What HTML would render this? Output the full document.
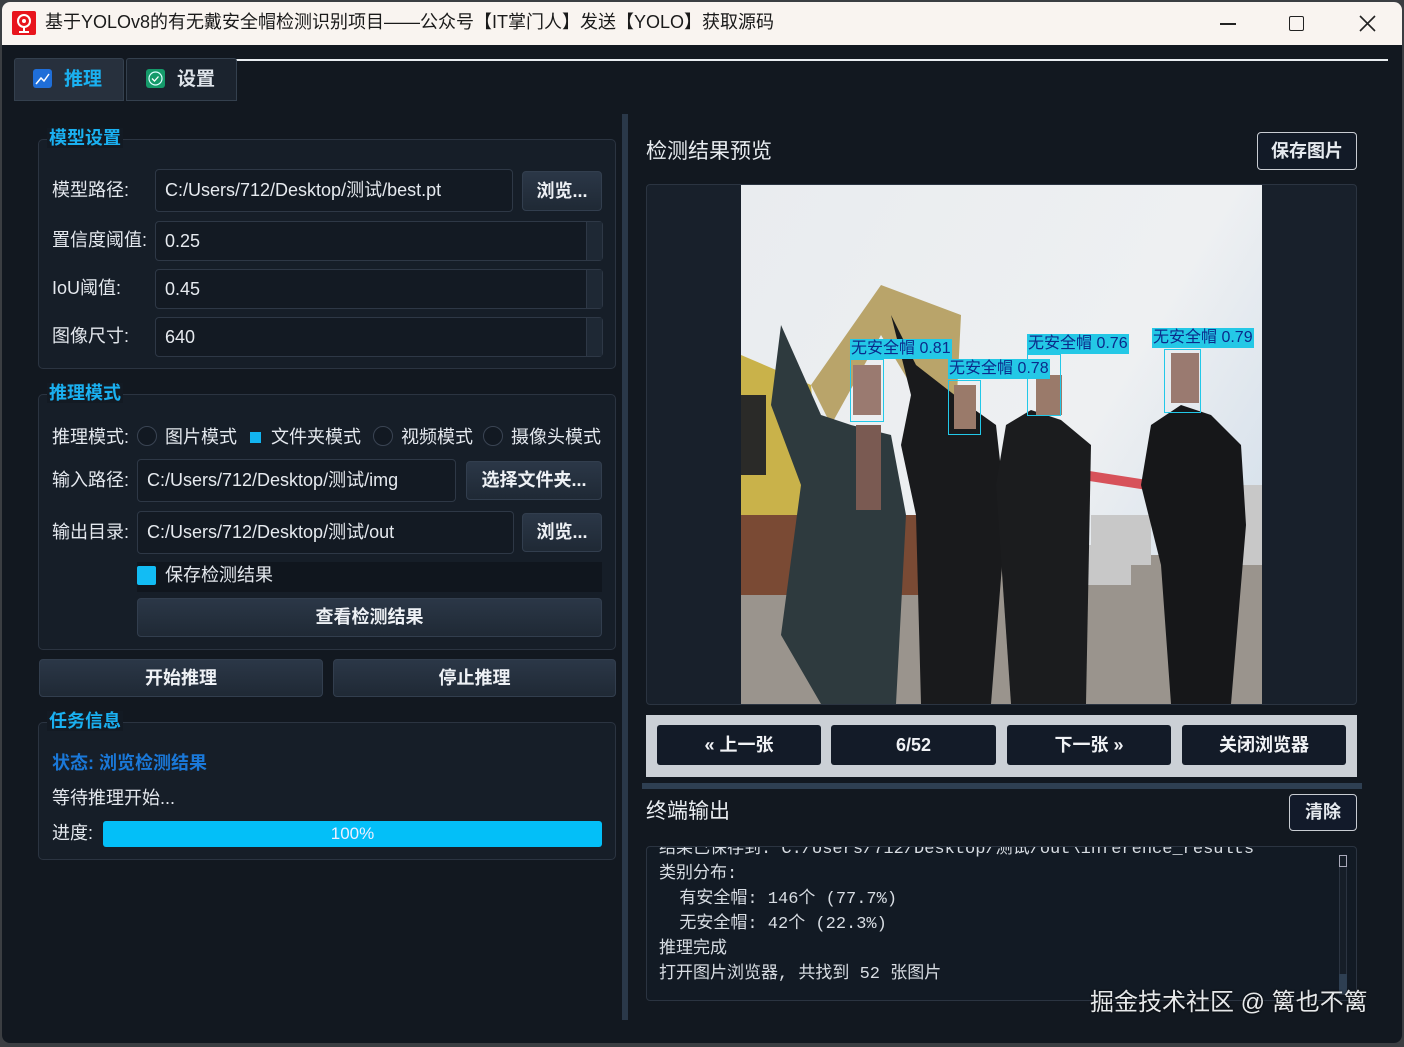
<!DOCTYPE html>
<html><head><meta charset="utf-8"><style>
*{box-sizing:border-box;margin:0;padding:0}
body{width:1404px;height:1047px;background:#3b3e42;position:relative;overflow:hidden;font-family:"Liberation Sans","Noto Sans CJK SC",sans-serif;color:#e6eaef;line-height:1.25}
.a{position:absolute}
#win{left:2px;top:2px;width:1400px;height:1041px;background:#121820;border-radius:8px;overflow:hidden}
#tb{left:0;top:0;width:1400px;height:43px;background:#f9f4f0;color:#1a1a1a;font-size:18px}
.lbl{font-size:18px;color:#e4e8ee;white-space:nowrap}
.grp{border:1px solid #2b3441;border-radius:5px;background:#161e28}
.gt{font-size:18px;font-weight:bold;color:#1ab0f0;background:#131a23;padding:0 2px;line-height:20px}
.inp{background:#131a23;border:1px solid #2e3846;border-radius:4px;font-size:18px;color:#e6eaef;padding-left:9px;display:flex;align-items:center}
.btn{background:linear-gradient(#2b3747,#1f2935);border:1px solid #323e4e;border-radius:4px;font-size:18px;font-weight:bold;color:#eef1f5;display:flex;align-items:center;justify-content:center}
.spin{background:#1e2834;border-left:1px solid #2e3846}
.nb{background:#131b28;border-radius:3px;font-size:18px;font-weight:bold;color:#f0f2f5;display:flex;align-items:center;justify-content:center;top:10px;height:40px}
.rad{width:20px;height:20px;border-radius:50%;border:1px solid #3a4453;background:#121922}
.mono{font-family:"Liberation Mono","Noto Sans CJK SC",monospace;font-size:17px;color:#d8dde3;white-space:pre;line-height:25px}
.det{border:1.5px solid #22c8e8}
.dl{background:#24c8e6;color:#0b2a8a;font-size:16px;line-height:20px;white-space:nowrap;padding:0 1px}
</style></head><body>
<div id="win" class="a">
<div id="tb" class="a">
 <div class="a" style="left:10px;top:9px;width:24px;height:24px;background:#e8141c;border-radius:2px"><svg width="24" height="24"><circle cx="12" cy="10" r="6" fill="none" stroke="#fff" stroke-width="2"/><circle cx="12" cy="10" r="2" fill="#fff"/><path d="M12 16v5M7 21h10" stroke="#fff" stroke-width="2"/></svg></div>
 <div class="a" style="left:43px;top:9px">基于YOLOv8的有无戴安全帽检测识别项目——公众号【IT掌门人】发送【YOLO】获取源码</div>
 <div class="a" style="left:1218px;top:21px;width:16px;height:1.5px;background:#222"></div>
 <div class="a" style="left:1287px;top:14px;width:15px;height:15px;border:1.5px solid #222;border-radius:2px"></div>
 <svg class="a" style="left:1357px;top:13px" width="17" height="17"><path d="M1 1L16 16M16 1L1 16" stroke="#222" stroke-width="1.6"/></svg>
</div>
<div class="a" style="left:190px;top:57px;width:1196px;height:1.5px;background:#e8ecf0"></div>
<div class="a" style="left:12px;top:56px;width:110px;height:43px;background:#27303d;border:1px solid #34404e;border-radius:3px 3px 0 0"></div>
<div class="a" style="left:31px;top:67px;width:19px;height:19px;background:#1f6ed8;border-radius:3px"><svg width="19" height="19"><path d="M3 15L8 9l3 3 5-7" stroke="#fff" stroke-width="1.5" fill="none"/></svg></div>
<div class="a" style="left:62px;top:66px;font-size:19px;font-weight:bold;color:#1ab0f0">推理</div>
<div class="a" style="left:124px;top:56px;width:111px;height:43px;background:#1b232e;border:1px solid #34404e;border-radius:3px 3px 0 0"></div>
<div class="a" style="left:144px;top:67px;width:19px;height:19px;background:#159a6a;border-radius:3px"><svg width="19" height="19"><circle cx="9.5" cy="9.5" r="6.5" fill="none" stroke="#dff" stroke-width="1.2"/><path d="M6 9.5l2.5 2.5 4-4.5" stroke="#fff" stroke-width="1.3" fill="none"/></svg></div>
<div class="a" style="left:175px;top:66px;font-size:19px;font-weight:bold;color:#dfe4ea">设置</div>
<div class="a" style="left:620px;top:112px;width:6px;height:906px;background:#2a3849"></div>

<div class="a grp" style="left:36px;top:137px;width:578px;height:230px"></div>
<div class="a gt" style="left:45px;top:126px">模型设置</div>
<div class="a lbl" style="left:50px;top:177px">模型路径:</div>
<div class="a inp" style="left:153px;top:167px;width:358px;height:43px">C:/Users/712/Desktop/测试/best.pt</div>
<div class="a btn" style="left:520px;top:169px;width:80px;height:40px">浏览...</div>
<div class="a lbl" style="left:50px;top:227px">置信度阈值:</div>
<div class="a inp" style="left:153px;top:219px;width:448px;height:40px">0.25</div>
<div class="a spin" style="left:584px;top:220px;width:16px;height:38px"></div>
<div class="a lbl" style="left:50px;top:275px">IoU阈值:</div>
<div class="a inp" style="left:153px;top:267px;width:448px;height:40px">0.45</div>
<div class="a spin" style="left:584px;top:268px;width:16px;height:38px"></div>
<div class="a lbl" style="left:50px;top:323px">图像尺寸:</div>
<div class="a inp" style="left:153px;top:315px;width:448px;height:40px">640</div>
<div class="a spin" style="left:584px;top:316px;width:16px;height:38px"></div>

<div class="a grp" style="left:36px;top:392px;width:578px;height:256px"></div>
<div class="a gt" style="left:45px;top:381px">推理模式</div>
<div class="a lbl" style="left:50px;top:424px">推理模式:</div>
<div class="a rad" style="left:135px;top:424px"></div><div class="a lbl" style="left:163px;top:424px">图片模式</div>
<div class="a" style="left:248px;top:430px;width:11px;height:11px;background:#12b4f0"></div><div class="a lbl" style="left:269px;top:424px">文件夹模式</div>
<div class="a rad" style="left:371px;top:424px"></div><div class="a lbl" style="left:399px;top:424px">视频模式</div>
<div class="a rad" style="left:481px;top:424px"></div><div class="a lbl" style="left:509px;top:424px">摄像头模式</div>
<div class="a lbl" style="left:50px;top:467px">输入路径:</div>
<div class="a inp" style="left:135px;top:457px;width:319px;height:43px">C:/Users/712/Desktop/测试/img</div>
<div class="a btn" style="left:464px;top:459px;width:136px;height:39px">选择文件夹...</div>
<div class="a lbl" style="left:50px;top:519px">输出目录:</div>
<div class="a inp" style="left:135px;top:509px;width:377px;height:43px">C:/Users/712/Desktop/测试/out</div>
<div class="a btn" style="left:520px;top:511px;width:80px;height:39px">浏览...</div>
<div class="a" style="left:135px;top:560px;width:465px;height:30px;background:#10161e"></div>
<div class="a" style="left:135px;top:564px;width:19px;height:19px;background:#12bcf4;border-radius:2px"></div>
<div class="a lbl" style="left:163px;top:562px">保存检测结果</div>
<div class="a btn" style="left:135px;top:596px;width:465px;height:39px">查看检测结果</div>

<div class="a btn" style="left:37px;top:657px;width:284px;height:38px">开始推理</div>
<div class="a btn" style="left:331px;top:657px;width:283px;height:38px">停止推理</div>

<div class="a grp" style="left:36px;top:720px;width:578px;height:138px"></div>
<div class="a gt" style="left:45px;top:709px">任务信息</div>
<div class="a" style="left:50px;top:750px;font-size:18px;font-weight:bold;color:#1a78d8">状态: 浏览检测结果</div>
<div class="a lbl" style="left:50px;top:785px">等待推理开始...</div>
<div class="a lbl" style="left:50px;top:820px">进度:</div>
<div class="a" style="left:101px;top:819px;width:499px;height:26px;background:#03bff8;border-radius:3px;color:#eef;font-size:17px;text-align:center;line-height:26px">100%</div>

<div class="a" style="left:644px;top:137px;font-size:21px;color:#e8ecf0">检测结果预览</div>
<div class="a" style="left:1255px;top:130px;width:100px;height:38px;border:1px solid #c8ccd2;border-radius:4px;background:#121a27;font-size:18px;font-weight:bold;display:flex;align-items:center;justify-content:center">保存图片</div>
<div class="a" style="left:644px;top:182px;width:711px;height:521px;border:1px solid #2b3441;border-radius:4px;background:#18202b"></div>
<svg class="a" style="left:739px;top:183px" width="521" height="519" viewBox="0 0 521 519">
<defs><linearGradient id="s" x1="0" y1="0" x2="1" y2="0.6"><stop offset="0" stop-color="#e9ecef"/><stop offset="0.7" stop-color="#eef0f2"/><stop offset="1" stop-color="#d8e2ec"/></linearGradient></defs>
<rect width="521" height="519" fill="url(#s)"/>
<rect x="0" y="370" width="521" height="149" fill="#9a948d"/>
<path d="M0 170L70 200 80 330 0 340Z" fill="#c9b24a"/>
<path d="M0 210h25v80H0z" fill="#2a2a28"/>
<path d="M70 200L140 100 220 130 215 230 185 300 170 200 140 150 90 240Z" fill="#b9a46a"/>
<path d="M0 330h180v80H0z" fill="#7a4a34"/>
<path d="M300 360h90v40h-90zM350 330h60v50h-60zM460 300h61v80h-61z" fill="#c8c8c8"/>
<path d="M310 280L470 305 470 315 310 290Z" fill="#d7525a"/>
<path d="M40 140L80 230 110 240 150 250 165 330 155 519 80 519 40 450 60 300 30 220Z" fill="#2e3a3e"/>
<path d="M112 180h28v50h-28z" fill="#9a7a70"/><path d="M115 240h25v85h-25z" fill="#7a5a52"/>
<path d="M150 130L175 180 220 215 255 240 265 330 250 519 180 519 175 330 160 260 170 210Z" fill="#191a1c"/>
<path d="M213 200h22v44h-22z" fill="#9a7a6a"/>
<path d="M265 240L290 225 320 235 350 260 345 519 270 519 255 300Z" fill="#1b1c1e"/>
<path d="M295 190h26v40h-26z" fill="#9a7a6a"/>
<path d="M410 240L440 220 470 230 500 260 505 340 490 519 430 519 420 380 400 300Z" fill="#161719"/>
<path d="M430 168h28v50h-28z" fill="#9a7a70"/>
</svg>
<div class="a det" style="left:848px;top:357px;width:34px;height:63px"></div><div class="a dl" style="left:848px;top:337px">无安全帽 0.81</div>
<div class="a det" style="left:946px;top:378px;width:33px;height:55px"></div><div class="a dl" style="left:946px;top:357px">无安全帽 0.78</div>
<div class="a det" style="left:1025px;top:352px;width:34px;height:62px"></div><div class="a dl" style="left:1025px;top:332px">无安全帽 0.76</div>
<div class="a det" style="left:1162px;top:347px;width:37px;height:64px"></div><div class="a dl" style="left:1150px;top:326px">无安全帽 0.79</div>

<div class="a" style="left:644px;top:713px;width:711px;height:62px;background:#cbd0d6">
 <div class="a nb" style="left:11px;width:164px">« 上一张</div>
 <div class="a nb" style="left:185px;width:165px">6/52</div>
 <div class="a nb" style="left:361px;width:164px">下一张 »</div>
 <div class="a nb" style="left:536px;width:164px">关闭浏览器</div>
</div>
<div class="a" style="left:640px;top:781px;width:720px;height:6px;background:#2e3f52"></div>
<div class="a" style="left:644px;top:797px;font-size:21px;color:#e8ecf0">终端输出</div>
<div class="a" style="left:1287px;top:792px;width:68px;height:37px;border:1px solid #c8ccd2;border-radius:4px;background:#121a2a;font-size:18px;font-weight:bold;display:flex;align-items:center;justify-content:center">清除</div>
<div class="a" style="left:644px;top:844px;width:711px;height:155px;border:1px solid #2b3441;border-radius:4px;background:#121a24;overflow:hidden">
 <div class="a mono" style="left:12px;top:-10px">结果已保存到: C:/Users/712/Desktop/测试/out\inference_results
类别分布:
  有安全帽: 146个 (77.7%)
  无安全帽: 42个 (22.3%)
推理完成
打开图片浏览器, 共找到 52 张图片</div>
 <div class="a" style="left:692px;top:8px;width:8px;height:140px;background:#161e28;border:1px solid #2b3441"></div>
 <div class="a" style="left:692px;top:8px;width:8px;height:12px;border:1px solid #aab"></div>
 <div class="a" style="left:692px;top:127px;width:8px;height:20px;background:#2e3f52"></div>
</div>
<div class="a" style="left:1088px;top:986px;font-size:24px;color:#e6e8ea;text-shadow:0 0 2px #000">掘金技术社区 @ 篱也不篱</div>
</div>
</body></html>
